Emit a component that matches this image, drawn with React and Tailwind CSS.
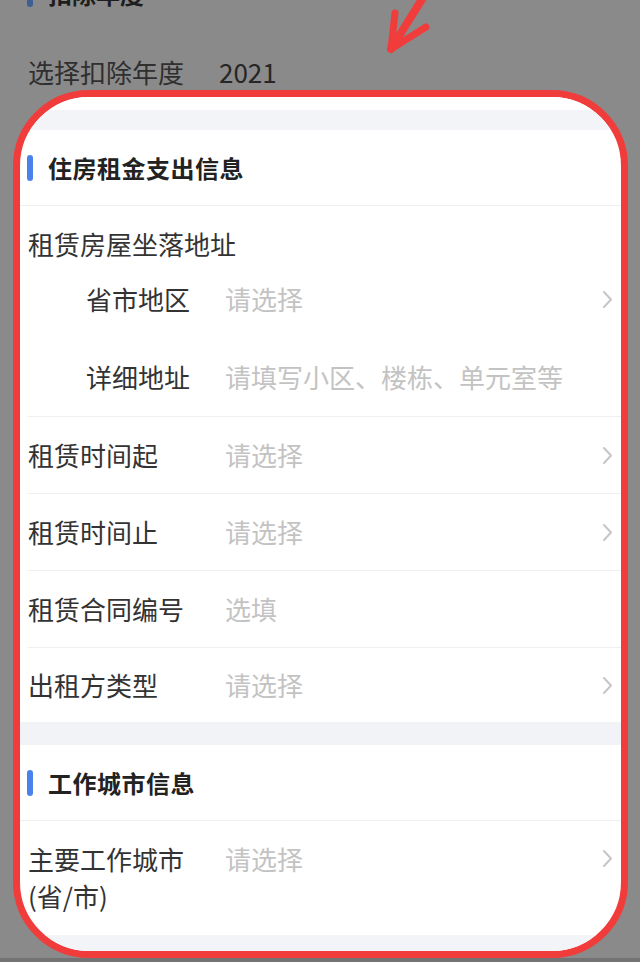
import React from "react";

const Chevron = () => (
  <svg width="11" height="19" viewBox="0 0 11 19" className="shrink-0">
    <polyline points="2,2 9,9.5 2,17" fill="none" stroke="#c6c6c6" strokeWidth="2" strokeLinecap="round" strokeLinejoin="round" />
  </svg>
);

const Divider = ({ inset }) => (
  <div className={inset ? "h-px bg-[#efeff1] ml-[8px]" : "h-px bg-[#efeff1]"} />
);

const SectionHeader = ({ title }) => (
  <div className="h-[75px] flex items-center pl-[7px] gap-[15px]">
    <div className="w-[6px] h-[26px] rounded-full bg-[#4a82ea]" />
    <div className="text-[24px] font-bold text-[#222222] leading-none tracking-[0.5px]">{title}</div>
  </div>
);

const Row = ({ label, value, chevron, h }) => (
  <div className={`${h} flex items-center pl-[8px] pr-[8px]`}>
    <div className="w-[197px] shrink-0 text-[26px] text-[#333333] leading-[36px]">{label}</div>
    <div className="flex-1 text-[26px] text-[#c3c3c3] leading-[36px]">{value}</div>
    {chevron && <Chevron />}
  </div>
);

const SubRow = ({ label, value, chevron }) => (
  <div className="h-[78px] flex items-center pl-[66px] pr-[8px]">
    <div className="w-[139px] shrink-0 text-[26px] text-[#333333] leading-[36px]">{label}</div>
    <div className="flex-1 text-[26px] text-[#c3c3c3] leading-[36px]">{value}</div>
    {chevron && <Chevron />}
  </div>
);

export default function App() {
  return (
    <div className="relative w-[640px] h-[962px] overflow-hidden bg-[#8a8a8a] font-['Noto_Sans_CJK_SC',sans-serif]">
      {/* dimmed page header */}
      <div className="mt-[-31px] h-[50px] flex items-center pl-[27px] gap-[15px]">
        <div className="w-[6px] h-[26px] rounded-full bg-[#3d5f93]" />
        <div className="text-[24px] font-bold text-[#1e1e1e] leading-none">扣除年度</div>
      </div>
      <div className="pt-[35px] h-[71px] flex pl-[28px]">
        <div className="w-[191px] text-[26px] leading-[36px] text-[#2f2f2f]">选择扣除年度</div>
        <div className="text-[26px] leading-[36px] text-[#262626]">2021</div>
      </div>

      {/* highlighted card */}
      <div className="ml-[13px] mr-[12px] h-[868px] rounded-[76px] border-[7px] border-[#f03d3b] bg-white overflow-hidden flex flex-col">
        <div className="h-[13px] bg-white" />
        <div className="h-[20px] bg-[#f3f4f8]" />
        <SectionHeader title="住房租金支出信息" />
        <Divider />
        <div className="pt-[22px]">
          <div className="pl-[8px] text-[26px] leading-[32px] text-[#333333]">租赁房屋坐落地址</div>
          <SubRow label="省市地区" value="请选择" chevron />
          <SubRow label="详细地址" value="请填写小区、楼栋、单元室等" />
        </div>
        <Divider inset />
        <Row h="h-[76px]" label="租赁时间起" value="请选择" chevron />
        <Divider inset />
        <Row h="h-[76px]" label="租赁时间止" value="请选择" chevron />
        <Divider inset />
        <Row h="h-[76px]" label="租赁合同编号" value="选填" />
        <Divider inset />
        <Row h="h-[74px]" label="出租方类型" value="请选择" chevron />
        <div className="h-[23px] bg-[#f2f3f7]" />
        <SectionHeader title="工作城市信息" />
        <Divider />
        <div className="h-[114px] flex items-start pl-[8px] pr-[8px] pt-[19px]">
          <div className="w-[197px] shrink-0 text-[26px] text-[#333333] leading-[37px]">
            <div>主要工作城市</div>
            <div>(省/市)</div>
          </div>
          <div className="flex-1 text-[26px] text-[#c3c3c3] leading-[37px]">请选择</div>
          <div className="h-[37px] flex items-center">
            <Chevron />
          </div>
        </div>
        <div className="flex-1 bg-[#f3f4f8]" />
      </div>
      <div className="h-[4px] bg-[#737373]" />

      {/* red annotation arrow */}
      <svg className="absolute left-[380px] top-0" width="60" height="60" viewBox="0 0 60 60">
        <g fill="none" stroke="#f03d3b" strokeLinecap="round" strokeLinejoin="round">
          <path d="M44 -4 L11 49" strokeWidth="8" />
          <path d="M11 49 L15 13" strokeWidth="7" />
          <path d="M11 49 L46 27" strokeWidth="7" />
        </g>
      </svg>
    </div>
  );
}
